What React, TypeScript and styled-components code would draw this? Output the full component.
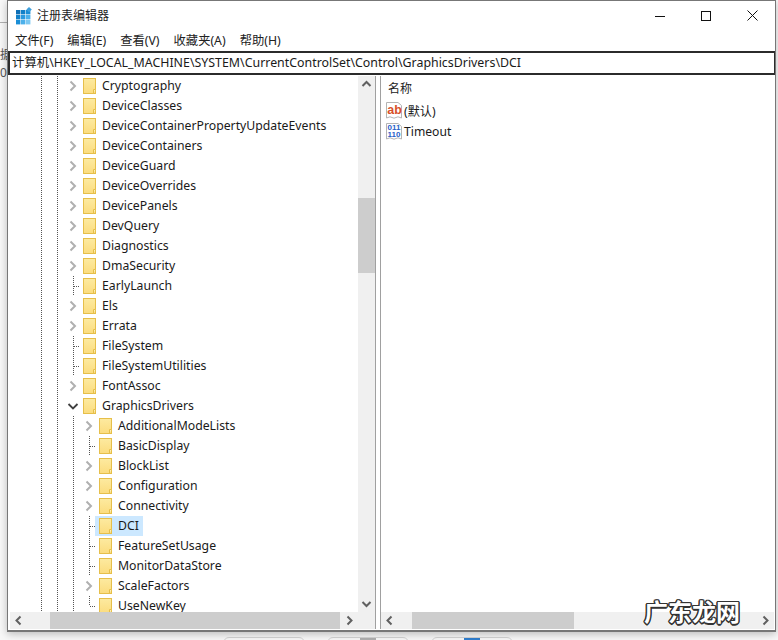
import React from 'react';
import styled, { createGlobalStyle } from 'styled-components';

const GlobalStyle = createGlobalStyle`
    html, body {
        margin: 0;
        padding: 0;
        background: #f8f8f8;
    }
    body {
        font-family: "Noto Sans", "Noto Sans CJK SC", sans-serif;
        color: #1a1a1a;
    }
`;

const Page = styled.div`
    width: 778px;
    height: 640px;
    overflow: hidden;
    position: relative;
    padding: 0 2px 8px 7px;
    box-sizing: border-box;
`;

const Window = styled.div`
    position: relative;
    z-index: 1;
    height: 632px;
    display: flex;
    flex-direction: column;
    background: #fff;
    border: 1px solid #777;
    border-bottom-width: 2px;
    box-sizing: border-box;
    box-shadow: 0 2px 8px rgba(0, 0, 0, 0.25);
`;

const TitleBar = styled.div`
    height: 29px;
    flex: none;
    display: flex;
    align-items: center;
    padding-left: 8px;
`;

const TitleText = styled.span`
    margin-left: 5px;
    padding-bottom: 2px;
    font-size: 12px;
    font-family: "Noto Sans CJK SC", sans-serif;
    color: #222;
`;

const WindowButtons = styled.div`
    margin-left: auto;
    display: flex;
    height: 100%;
`;

const WindowButton = styled.div`
    width: 46px;
    display: flex;
    align-items: center;
    justify-content: center;
`;

const MenuBar = styled.div`
    height: 20px;
    flex: none;
    display: flex;
    align-items: center;
    gap: 14px;
    padding: 0 0 1px 7px;
    box-sizing: border-box;
`;

const MenuItem = styled.span`
    font-size: 12.3px;
    font-family: "Noto Sans", "Noto Sans CJK SC", sans-serif;
    color: #222;
`;

const AddressBar = styled.div`
    height: 24px;
    flex: none;
    box-sizing: border-box;
    margin: 1px 0 1px 0;
    border: 1px solid #2b2b2b;
    border-width: 2px 1px 2px 2px;
    display: flex;
    align-items: center;
    padding: 0 0 2px 2px;
    font-size: 12.38px;
    white-space: nowrap;
    color: #1a1a1a;
    background: #fff;
`;

const Panes = styled.div`
    flex: 1;
    min-height: 0;
    display: flex;
    padding: 0 1px 1px 2px;
`;

const TreePane = styled.div`
    width: 365px;
    flex: none;
    display: grid;
    grid-template-columns: 1fr 17px;
    grid-template-rows: 1fr 17px;
    border-right: 1px solid #a0a0a0;
`;

const ListPane = styled.div`
    flex: 1;
    min-width: 0;
    margin-left: 4px;
    display: grid;
    grid-template-rows: 1fr 17px;
    border-left: 1px solid #a0a0a0;
`;

const TreeBody = styled.div`
    overflow: hidden;
    padding-left: 23px;
`;

const Row = styled.div`
    height: 20px;
    display: flex;
    align-items: center;
`;

const Selection = styled.div<{ $selected?: boolean }>`
    height: 20px;
    display: flex;
    align-items: center;
    padding: 0 4px 0 2px;
    margin-left: ${(p) => (p.$selected ? '-2px' : '0')};
    padding-left: ${(p) => (p.$selected ? '4px' : '2px')};
    background: ${(p) => (p.$selected ? '#cce8ff' : 'transparent')};
`;

const Label = styled.span`
    margin-left: 6px;
    padding-bottom: 2px;
    font-size: 12.25px;
    white-space: nowrap;
    color: #1a1a1a;
`;

const ListBody = styled.div`
    padding: 0 0 0 5px;
    overflow: hidden;
`;

const ColumnHead = styled.div`
    height: 23px;
    margin-bottom: 1px;
    display: flex;
    align-items: center;
    padding-left: 2px;
    font-size: 12px;
    font-family: "Noto Sans CJK SC", sans-serif;
    color: #222;
`;

const ValueRow = styled.div`
    height: 21px;
    display: flex;
    align-items: center;
    font-size: 12.15px;
    color: #1a1a1a;
`;

const ValueName = styled.span`
    margin-left: 1px;
    font-family: "Noto Sans", "Noto Sans CJK SC", sans-serif;
`;

const VScroll = styled.div`
    background: #f0f0f0;
    display: flex;
    flex-direction: column;
`;

const VThumb = styled.div`
    height: 75px;
    flex: none;
    margin-top: 105px;
    margin-bottom: auto;
    background: #cdcdcd;
`;

const HScroll = styled.div`
    background: #f0f0f0;
    display: flex;
    align-items: center;
`;

const HThumb = styled.div<{ $offset: number; $width: number }>`
    height: 100%;
    margin-left: ${(p) => p.$offset}px;
    width: ${(p) => p.$width}px;
    background: #cdcdcd;
`;

const ScrollArrow = styled.div<{ $end?: boolean }>`
    width: 17px;
    height: 17px;
    flex: none;
    display: flex;
    align-items: center;
    justify-content: center;
    margin-left: ${(p) => (p.$end ? 'auto' : '0')};
`;

const Corner = styled.div`
    background: #f0f0f0;
`;

const Watermark = styled.div`
    position: absolute;
    z-index: 2;
    left: 644px;
    top: 594px;
    font-size: 24px;
    font-weight: 700;
    line-height: 34px;
    font-family: "Noto Sans CJK SC", sans-serif;
    color: #fff;
    text-shadow:
        1.5px 0 0 #333, -1.5px 0 0 #333, 0 1.5px 0 #333, 0 -1.5px 0 #333,
        1.1px 1.1px 0 #333, -1.1px 1.1px 0 #333, 1.1px -1.1px 0 #333, -1.1px -1.1px 0 #333;
`;

const Backdrop = styled.div`
    position: absolute;
    left: 0;
    top: 22px;
    width: 7px;
    height: 60px;
    border-top: 1px solid #b0b0b0;
    box-sizing: border-box;
    padding-top: 23px;
    font-size: 12px;
    line-height: 18px;
    overflow: hidden;
    color: #555;
    white-space: nowrap;
`;

const BackdropTabs = styled.div`
    position: absolute;
    left: 223px;
    top: 637px;
    display: flex;
    gap: 22px;
`;

const BackdropTab = styled.div`
    width: 82px;
    height: 12px;
    box-sizing: border-box;
    border: 1px solid #d4d4d4;
    border-radius: 6px;
    display: flex;
    justify-content: center;
`;

const TabMark = styled.div<{ $color: string }>`
    width: 16px;
    height: 2px;
    background: ${(p) => p.$color};
`;

type Kind = 'open' | 'closed' | 'leaf' | 'last';

const Connector = ({ kind }: { kind?: Kind | 'pass' }) => (
    <svg width="16" height="20" style={{ flex: 'none' }} shapeRendering="crispEdges">
        {(kind === 'pass' || kind === 'leaf') && (
            <path d="M8.5 0V20" stroke="#555" strokeDasharray="1 1" fill="none" />
        )}
        {kind === 'last' && <path d="M8.5 0V10" stroke="#555" strokeDasharray="1 1" fill="none" />}
        {(kind === 'leaf' || kind === 'last') && (
            <path d="M9 10.5H15" stroke="#555" strokeDasharray="1 1" fill="none" />
        )}
        {kind === 'closed' && (
            <g shapeRendering="auto">
                <path d="M5.5 5.5L10 10L5.5 14.5" stroke="#b0b0b0" strokeWidth="2" fill="none" />
            </g>
        )}
        {kind === 'open' && (
            <g shapeRendering="auto">
                <path d="M3.5 8L8 12.5L12.5 8" stroke="#404040" strokeWidth="1.8" fill="none" />
            </g>
        )}
    </svg>
);

const Folder = () => (
    <svg width="13" height="16" viewBox="0 0 13 16" style={{ flex: 'none' }}>
        <defs>
            <linearGradient id="folderFill" x1="0" y1="0" x2="0" y2="1">
                <stop offset="0" stopColor="#fdeaa0" />
                <stop offset="1" stopColor="#fbdc7e" />
            </linearGradient>
        </defs>
        <rect x="0.5" y="0.5" width="12" height="15" fill="url(#folderFill)" stroke="#e6bf4a" />
        <path d="M10.5 15.5V11.5H12.5" stroke="#e6bf4a" fill="#fdf0bc" />
    </svg>
);

const appCells: [number, number, string][] = [
    [0, 3, '#0f6fb5'],
    [5, 3, '#1280c8'],
    [10, 3, '#1a8ed6'],
    [0, 8, '#1280c8'],
    [5, 8, '#2a9ae0'],
    [10, 8, '#4cb0ea'],
    [0, 13, '#1a8ed6'],
    [5, 13, '#4cb0ea'],
    [10, 13, '#7cc8f2'],
];

const AppIcon = () => (
    <svg width="16" height="18" viewBox="0 0 16 18" style={{ flex: 'none' }}>
        {appCells.map(([x, y, fill]) => (
            <rect key={`${x}-${y}`} x={x} y={y} width="4.4" height="4.4" fill={fill} />
        ))}
        <path d="M13 0L15.8 2.6L13 5.2L10.4 2.6Z" fill="#3f9fdc" />
    </svg>
);

const ValuePaper = ({ children }: { children: React.ReactNode }) => (
    <svg width="17" height="17" viewBox="0 0 17 17" style={{ flex: 'none' }}>
        <path d="M0.5 0.5H12L15.5 3.5V16L12 14.8L8 16.2L4 14.8L0.5 16Z" fill="#fff" stroke="#b4b4b4" />
        {children}
    </svg>
);

const StringIcon = () => (
    <ValuePaper>
        <text x="1.2" y="11.5" fontSize="12.5" fontWeight="700" fill="#d8502a" fontFamily="Liberation Sans, sans-serif">
            ab
        </text>
    </ValuePaper>
);

const BinaryIcon = () => (
    <ValuePaper>
        <text x="1.6" y="7" fontSize="8" fontWeight="700" fill="#2860c8" fontFamily="Liberation Sans, sans-serif">
            011
        </text>
        <text x="1.6" y="14" fontSize="8" fontWeight="700" fill="#2860c8" fontFamily="Liberation Sans, sans-serif">
            110
        </text>
    </ValuePaper>
);

const Arrow = ({ dir }: { dir: 'up' | 'down' | 'left' | 'right' }) => {
    const paths = {
        up: 'M4.5 10L8.5 6L12.5 10',
        down: 'M4.5 7L8.5 11L12.5 7',
        left: 'M10.5 4.5L6.5 8.5L10.5 12.5',
        right: 'M6.5 4.5L10.5 8.5L6.5 12.5',
    };
    return (
        <svg width="17" height="17">
            <path d={paths[dir]} stroke="#606060" strokeWidth="2" fill="none" />
        </svg>
    );
};

const level1: [string, Kind][] = [
    ['Cryptography', 'closed'],
    ['DeviceClasses', 'closed'],
    ['DeviceContainerPropertyUpdateEvents', 'closed'],
    ['DeviceContainers', 'closed'],
    ['DeviceGuard', 'closed'],
    ['DeviceOverrides', 'closed'],
    ['DevicePanels', 'closed'],
    ['DevQuery', 'closed'],
    ['Diagnostics', 'closed'],
    ['DmaSecurity', 'closed'],
    ['EarlyLaunch', 'leaf'],
    ['Els', 'closed'],
    ['Errata', 'closed'],
    ['FileSystem', 'leaf'],
    ['FileSystemUtilities', 'leaf'],
    ['FontAssoc', 'closed'],
    ['GraphicsDrivers', 'open'],
];

const level2: [string, Kind][] = [
    ['AdditionalModeLists', 'closed'],
    ['BasicDisplay', 'leaf'],
    ['BlockList', 'closed'],
    ['Configuration', 'closed'],
    ['Connectivity', 'closed'],
    ['DCI', 'leaf'],
    ['FeatureSetUsage', 'leaf'],
    ['MonitorDataStore', 'leaf'],
    ['ScaleFactors', 'closed'],
    ['UseNewKey', 'last'],
];

const menus = ['文件(F)', '编辑(E)', '查看(V)', '收藏夹(A)', '帮助(H)'];

const App = () => (
    <Page>
        <GlobalStyle />
        <Backdrop>
            <div>据</div>
            <div>00</div>
        </Backdrop>
        <BackdropTabs>
            <BackdropTab />
            <BackdropTab>
                <TabMark $color="#b0b0b0" />
            </BackdropTab>
            <BackdropTab>
                <TabMark $color="#2f7fd0" />
            </BackdropTab>
        </BackdropTabs>
        <Window>
            <TitleBar>
                <AppIcon />
                <TitleText>注册表编辑器</TitleText>
                <WindowButtons>
                    <WindowButton>
                        <svg width="10" height="10" shapeRendering="crispEdges">
                            <path d="M0 5.5H10" stroke="#111" fill="none" />
                        </svg>
                    </WindowButton>
                    <WindowButton>
                        <svg width="10" height="10" shapeRendering="crispEdges">
                            <rect x="0.5" y="0.5" width="9" height="9" stroke="#111" fill="none" />
                        </svg>
                    </WindowButton>
                    <WindowButton>
                        <svg width="11" height="11">
                            <path d="M0.5 0.5L10.5 10.5M10.5 0.5L0.5 10.5" stroke="#111" fill="none" />
                        </svg>
                    </WindowButton>
                </WindowButtons>
            </TitleBar>
            <MenuBar>
                {menus.map((m) => (
                    <MenuItem key={m}>{m}</MenuItem>
                ))}
            </MenuBar>
            <AddressBar>计算机\HKEY_LOCAL_MACHINE\SYSTEM\CurrentControlSet\Control\GraphicsDrivers\DCI</AddressBar>
            <Panes>
                <TreePane>
                    <TreeBody>
                        {level1.map(([name, kind]) => (
                            <Row key={name}>
                                <Connector kind="pass" />
                                <Connector kind="pass" />
                                <Connector kind={kind} />
                                <Selection>
                                    <Folder />
                                    <Label>{name}</Label>
                                </Selection>
                            </Row>
                        ))}
                        {level2.map(([name, kind]) => (
                            <Row key={name}>
                                <Connector kind="pass" />
                                <Connector kind="pass" />
                                <Connector kind="pass" />
                                <Connector kind={kind} />
                                <Selection $selected={name === 'DCI'}>
                                    <Folder />
                                    <Label>{name}</Label>
                                </Selection>
                            </Row>
                        ))}
                    </TreeBody>
                    <VScroll>
                        <ScrollArrow>
                            <Arrow dir="up" />
                        </ScrollArrow>
                        <VThumb />
                        <ScrollArrow>
                            <Arrow dir="down" />
                        </ScrollArrow>
                    </VScroll>
                    <HScroll>
                        <ScrollArrow>
                            <Arrow dir="left" />
                        </ScrollArrow>
                        <HThumb $offset={23} $width={290} />
                        <ScrollArrow $end>
                            <Arrow dir="right" />
                        </ScrollArrow>
                    </HScroll>
                    <Corner />
                </TreePane>
                <ListPane>
                    <ListBody>
                        <ColumnHead>名称</ColumnHead>
                        <ValueRow>
                            <StringIcon />
                            <ValueName>(默认)</ValueName>
                        </ValueRow>
                        <ValueRow>
                            <BinaryIcon />
                            <ValueName>Timeout</ValueName>
                        </ValueRow>
                    </ListBody>
                    <HScroll>
                        <ScrollArrow>
                            <Arrow dir="left" />
                        </ScrollArrow>
                        <HThumb $offset={14} $width={162} />
                        <ScrollArrow $end>
                            <Arrow dir="right" />
                        </ScrollArrow>
                    </HScroll>
                </ListPane>
            </Panes>
        </Window>
        <Watermark>广东龙网</Watermark>
    </Page>
);

export default App;
